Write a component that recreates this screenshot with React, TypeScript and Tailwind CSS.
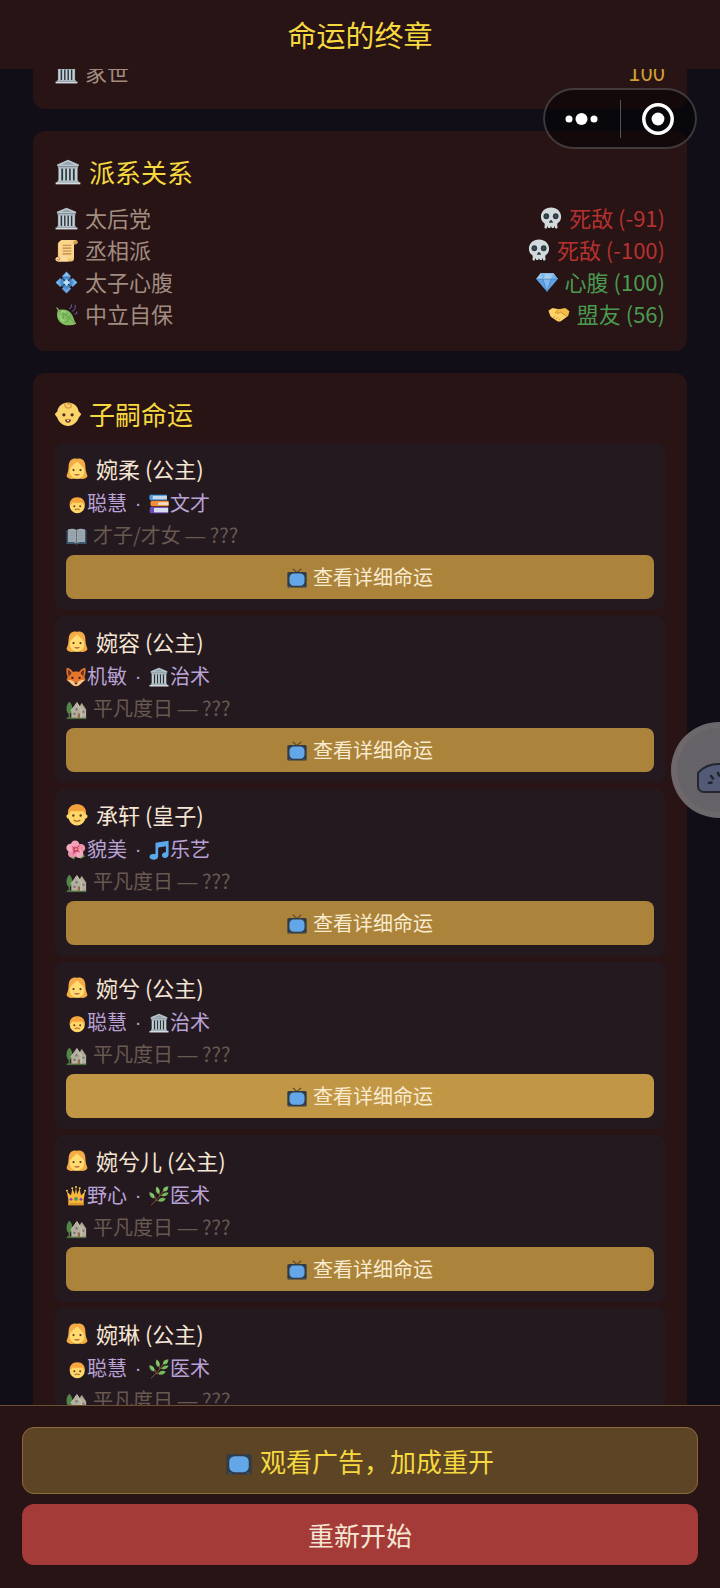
import React from 'react';
import clsx from 'clsx';

const icons = {
  palace: (
    <>
      <path d="M3 8h18v13H3z" fill="#7f929c" />
      <path d="M5.4 9h2.4v11H5.4zM9 9h2.4v11H9zM12.6 9H15v11h-2.4zM16.2 9h2.4v11h-2.4z" fill="#2b343a" />
      <path d="M3.6 8.6h2.2v11.6H3.6zM7.5 8.6h2v11.6h-2zM11 8.6h2v11.6h-2zM14.5 8.6h2v11.6h-2zM18.2 8.6h2.2v11.6h-2.2z" fill="#c3d0d6" />
      <path d="M12 .8 22 5v1.8H2V5z" fill="#b9c6cc" />
      <path d="M12 2.6 18.2 5.3H5.8z" fill="#8fa2ac" />
      <path d="M2.8 6.8h18.4v1.8H2.8z" fill="#a9b8bf" />
      <path d="M2.4 19.8h19.2v1.6H2.4z" fill="#aebdc4" />
      <path d="M.6 21.4h22.8v2H.6z" fill="#d3dce0" />
    </>
  ),
  scroll: (
    <>
      <path d="M7 1h14.2c1.6 0 2.4 1.1 2.4 2.3S22.6 5.4 21.4 5.4h-1.6v15.2c0 1.7-1.1 2.9-2.8 2.9H3V4.2z" fill="#f3c674" />
      <path d="M7 1.2c-2 .3-3 1.7-3 3.6V20h15.8V5.4l1.3-2.2L20 1.2z" fill="#fbd58c" />
      <path d="M21.2 1.6a2 2 0 0 0-2 2v1.8h2.2c1.2 0 2.1-.9 2.1-2s-.9-1.8-2.3-1.8z" fill="#d59a4e" />
      <path d="M2.9 18.8h10.8c-1.1 1.3-1 3.1.3 4.7H3C1.4 23.5.4 22.500.4 21.200s1-2.400 2.500-2.400z" fill="#fbdc9e" />
      <path d="M2.900 18.800c1.300 0 2 .9 2 1.900s-.7 1.500-1.500 1.500-1.300-.5-1.300-1.200" fill="none" stroke="#b9793a" strokeWidth="1" />
      <path d="M8 6.500h9M8 9.500h9M8 12.500h9M8 15.500h9" stroke="#b98245" strokeWidth="1.200" />
    </>
  ),
  flower: (
    <>
      <path d="M12 .6 16.800 5.400 12 10.200 7.200 5.400zM12 13.800l4.800 4.800-4.800 4.800-4.800-4.800zM5.400 7.200l4.800 4.800-4.800 4.800L.6 12zM18.600 7.200l4.800 4.800-4.800 4.800-4.800-4.800z" fill="#64a5e4" />
      <path d="M8 7.300 12 5l4 2.300 2.700 4.700-2.700 4.700-4 2.300-4-2.300L5.300 12z" fill="#4a88c6" />
      <path d="M12 1.800 14.600 4.600 12 5.600 9.400 4.600zM3.600 9.800l-2 2.200 2 1.500zM20.400 9.800l2 2.200-2 1.500z" fill="#8fc4f4" />
      <path d="M12 8.400 15.600 12 12 15.600 8.400 12z" fill="#b9ddf8" />
      <path d="m8.300 8.300 2 2M15.700 8.300l-2 2M8.300 15.700l2-2M15.700 15.700l-2-2" stroke="#23415f" strokeWidth="1.300" />
    </>
  ),
  leaf: (
    <>
      <path d="M1 4.500c2 .3 2.600 1.400 3.200 2.800 5.500-1.400 11 .2 13.600 5 1.900 3.500 2.100 6.700 4.400 9.300-6.900 3-14.800 2-18.200-3.200-2.300-3.600-2.300-7.400-1-10.500z" fill="#84c062" />
      <path d="M4.200 8.300c5 2.200 11 7.200 16.400 12.700M9 11v4.500l-4 .3M13.500 14.500v4.800l-4.200 1M11.500 8.500l.3 4.500M16 11.800l-.2 4.600" stroke="#5a9549" strokeWidth=".8" fill="none" />
      <path d="M6 9.500c2-.9 4.400-.6 6 .2M5 13.500c.8 2.500 2 4.500 5 6" stroke="#a5d681" strokeWidth="1.300" fill="none" />
      <path d="M14.500 6c2.300-.7 3-2.400 2.700-4.500M18 8.500c2.600-.5 3.500-2.900 3-6.500M20.500 11.500c1.600 0 2.300-1 2.500-2.500" stroke="#56609c" strokeWidth="1.100" fill="none" />
    </>
  ),
  skull: (
    <>
      <path d="M12 .6c6.300 0 11 4.300 11 10 0 3.300-1.300 5.400-3.600 6.800l-.6 1.400.3 3.600c0 .7-.6 1.100-1.300 1.100s-1.200-.3-1.400-1l-.5-2-.7 2c-.3.7-2.200.7-2.500 0l-.7-1.800-.7 1.800c-.3.7-2.200.7-2.500 0l-.7-2-.5 2c-.2.7-.7 1-1.400 1s-1.300-.4-1.300-1.100l.3-3.600-.6-1.400C2.300 16 1 13.900 1 10.600c0-5.700 4.700-10 11-10z" fill="#d3dadd" />
      <ellipse cx="6.900" cy="10" rx="3.100" ry="3.300" fill="#2f3b42" />
      <ellipse cx="17.100" cy="10" rx="3.100" ry="3.300" fill="#2f3b42" />
      <circle cx="6.900" cy="10" r="1.100" fill="#4c5b64" />
      <circle cx="17.100" cy="10" r="1.100" fill="#4c5b64" />
      <path d="M12 14.200c1 0 2 1.700 2 2.600 0 .8-1.400.8-2 .1-.6.7-2 .7-2-.1 0-.9 1-2.600 2-2.600z" fill="#2f3b42" />
    </>
  ),
  gem: (
    <>
      <path d="M5 2.500h14l4.800 6.300L12 22.500.2 8.800z" fill="#5fa3e6" />
      <path d="M5 2.500h14l4.800 6.300H.2z" fill="#9cc8f1" />
      <path d="m5 2.500 2.500 6.300L12 2.500l4.500 6.300L19 2.500l4.800 6.300h-5.300z" fill="#74b0e9" />
      <path d="M7.500 8.800h9L12 22.500z" fill="#80b7ee" />
      <path d="M12 2.500 7.500 8.800h9z" fill="#a5cff4" />
      <path d="M.2 8.800h23.600M7.500 8.800 12 22.500l4.500-13.700" stroke="#3a71ad" strokeWidth=".6" fill="none" />
    </>
  ),
  handshake: (
    <>
      <path d="M.4 8.500 4.600 5.700c2.500.3 4.500.8 6.800.8 2.700 0 5-1 8-.8l4 3.400-1.400 5.200-7.600 5.200c-1.500.8-3.200 1-4.600 0L3 15z" fill="#f4bd49" />
      <path d="M4.600 5.700c2.500.3 4.700.8 6.800.8L8 10.500c1.500 1.500 3.800.8 5.600-.7l7 4.600-6.200 4.800c-1.500.9-3.200.9-4.600 0L3 14.300 1 8.700z" fill="#ffd368" />
      <path d="M11.400 6.600 8 10.500c1.500 1.500 3.800.8 5.600-.7l6.800 4.800M6 16l2-1.700M8.500 17.600l2.200-2M11.200 19l2-2" stroke="#c28625" strokeWidth=".9" fill="none" />
    </>
  ),
  baby: (
    <>
      <path d="M12 1.400c5.200 0 9 3.300 9.900 8.300l1.700 1.500c.5.500.5 1.500 0 2L22 15.200c-1.600 4.600-5.200 7.800-10 7.800s-8.400-3.200-10-7.800L.4 13.200c-.5-.5-.5-1.500 0-2l1.700-1.500C3 4.700 6.800 1.400 12 1.400z" fill="#fbd36b" />
      <path d="M9 2.600c0 2.500 1.200 3.900 3.200 3.900 1.700 0 2.800-1 2.800-2.200 0-1.300-1-2-2.100-2-.9 0-1.500.6-1.500 1.200" stroke="#d9963a" strokeWidth="1.200" fill="none" />
      <circle cx="8.200" cy="12.800" r="1.500" fill="#4a2f1e" />
      <circle cx="15.800" cy="12.800" r="1.500" fill="#4a2f1e" />
      <path d="M9.300 17h5.400c0 1.800-1.100 3-2.700 3s-2.700-1.200-2.700-3z" fill="#6b2f20" />
      <path d="M11 17.500h2l-.4 1.200h-1.200z" fill="#fff" />
    </>
  ),
  girl: (
    <>
      <path d="M12 1c-1.500-.8-5-.6-7.200 1.800C2.500 5.400 3 9 2.600 12.500 2.300 15.700.8 17.500.6 20c1.400 2.500 4.500 3.400 7 2.700h8.800c2.500.7 5.600-.2 7-2.700-.2-2.500-1.700-4.300-2-7.500-.4-3.500.1-7.100-2.200-9.700C17 .4 13.500.2 12 1z" fill="#f3ab42" />
      <path d="M12 4c5.200 1 7.900 4.800 8.100 9 .2 5.700-3 9.300-8.100 9.300S3.700 18.700 3.900 13C4.100 8.800 6.800 5 12 4z" fill="#ffdb70" />
      <path d="M12 2.500C10.500 6.500 6.500 8 4 12 3.300 6 6 2 12 2.500zM12 2.500C13.500 6.500 17.500 8 20 12 20.700 6 18 2 12 2.500z" fill="#f5ab4b" />
      <circle cx="8.200" cy="13.200" r="1.200" fill="#5a3923" />
      <circle cx="15.800" cy="13.200" r="1.200" fill="#5a3923" />
      <path d="M8.800 17.600h6.400c-.8 1.900-5.600 1.900-6.400 0z" fill="#b54c36" />
    </>
  ),
  boy: (
    <>
      <path d="M12 .6c6 0 9.800 4 9.800 9.600v1.200c1.500.2 1.900 1.300 1.600 2.500-.3 1.300-1 2-2.200 2-1.300 4.500-4.600 7.500-9.200 7.500s-7.900-3-9.200-7.500c-1.200 0-1.900-.7-2.200-2-.3-1.200.1-2.300 1.600-2.500v-1.200C2.200 4.600 6 .6 12 .6z" fill="#ffd768" />
      <path d="M12 .4c6.300 0 10.300 4.200 9.900 10.600-2-.5-2.200-2.500-3.600-3.700C14 8.200 10 8.100 5.700 7.300 4.300 8.500 4 10.600 2.100 11 1.700 4.600 5.700.4 12 .4z" fill="#f2a03c" />
      <circle cx="8" cy="12.600" r="1.300" fill="#5a3923" />
      <circle cx="16" cy="12.600" r="1.300" fill="#5a3923" />
      <path d="M8.300 17.500c2 1.800 5.400 1.800 7.400 0" stroke="#a8642a" strokeWidth="1.300" fill="none" />
    </>
  ),
  thinker: (
    <>
      <circle cx="13.500" cy="14" r="9" fill="#ffd768" />
      <path d="M13.500 4c6 0 9.500 4 9 9.500-1.800-.6-2.300-2.200-3.300-3.400-4 .5-7.400.5-11.400 0-1 1.200-1.500 2.800-3.300 3.400C4 8 7.500 4 13.500 4z" fill="#f6a53c" />
      <circle cx="10" cy="14.600" r="1.200" fill="#5a3923" />
      <circle cx="17" cy="14.600" r="1.200" fill="#5a3923" />
      <path d="M10.500 19c1.800-1.300 4.200-1.300 6 0" stroke="#a8642a" strokeWidth="1.300" fill="none" />
    </>
  ),
  books: (
    <>
      <path d="M1.500 1h20v6.500h-20C0 6.700 0 1.800 1.500 1z" fill="#4b9be0" />
      <path d="M4.500 2.300h17V6.200h-17z" fill="#c9d8e8" />
      <path d="M3 8.200h20.500v6.600H3c-1.600-.8-1.600-5.800 0-6.600z" fill="#ef8d3c" />
      <path d="M11 9.800h12.500v3.500H11z" fill="#f7dcbf" />
      <path d="M2 15.500h21v7.700H2c-1.600-.8-1.600-6.900 0-7.700z" fill="#6f4bb4" />
      <path d="M6 16.700h17v5.300H6z" fill="#d7dcf4" />
    </>
  ),
  book: (
    <>
      <path d="M.6 5 3 3.600h18L23.400 5v15.500h-9.800L12 21.800l-1.600-1.300H.6z" fill="#3a566c" />
      <path d="M2.300 4c3.500-1.400 7-1.100 9.700.8 2.700-1.900 6.200-2.200 9.700-.8v14.600c-3.700-.8-7.200-.5-9.700 1.200-2.500-1.700-6-2-9.700-1.200z" fill="#9ba6ae" />
      <path d="M12 4.800v15" stroke="#5c6a75" strokeWidth="1" />
      <path d="M5 7.500c2-.4 3.500-.2 5 .5M5 11c2-.4 3.500-.2 5 .5M5 14.500c2-.4 3.500-.2 5 .5M19 7.500c-2-.4-3.500-.2-5 .5M19 11c-2-.4-3.500-.2-5 .5M19 14.500c-2-.4-3.500-.2-5 .5" stroke="#87939c" strokeWidth=".7" fill="none" />
    </>
  ),
  fox: (
    <>
      <path d="M.8.8c3.600.6 6 2.600 7.600 5.200 2.400-.7 4.800-.7 7.200 0C17.200 3.400 19.600 1.400 23.200.8c.7 4.200.2 8-1.200 11l1.400 3.800-4 3c-1.800 1.700-4 4.600-7.400 4.600s-5.600-2.900-7.400-4.600l-4-3L2 11.800C.6 8.800.1 5 .8.8z" fill="#e4752b" />
      <path d="M2.600 3.200c2 .9 3.300 2.400 4 4.400L3.500 11c-1-2.500-1.300-5-.9-7.800zM21.400 3.200c-2 .9-3.300 2.400-4 4.400l3.100 3.400c1-2.500 1.300-5 .9-7.800z" fill="#6b3324" />
      <path d="M2 16c3.500-1.200 7 .2 10 4.500 3-4.300 6.500-5.700 10-4.500l-3.300 2.800c-2 2-3.900 4-6.700 4s-4.700-2-6.700-4z" fill="#f2c98c" />
      <circle cx="7.700" cy="13" r="1.400" fill="#3a2018" />
      <circle cx="16.300" cy="13" r="1.400" fill="#3a2018" />
      <path d="M10 19h4l-2 2.400z" fill="#2f1c18" />
    </>
  ),
  blossom: (
    <>
      <path d="M2 17 9 23.500l4-4.500 5 3.500 5-3-6-6z" fill="#5b9a4c" />
      <circle cx="11" cy="5.800" r="5.200" fill="#f3a0b8" />
      <circle cx="18" cy="9.800" r="5" fill="#ee90ab" />
      <circle cx="15.800" cy="16.600" r="5" fill="#f5a9bf" />
      <circle cx="7.400" cy="16.400" r="5" fill="#ee90ab" />
      <circle cx="5.400" cy="9.400" r="5" fill="#f5a9bf" />
      <circle cx="11.500" cy="11.500" r="3.600" fill="#dd4f78" />
      <path d="m11.500 11.500 4.500-5M11.500 11.500 7 7.500M11.500 11.500l5 3M11.500 11.500l-3 5.500" stroke="#c23a66" strokeWidth="1.200" />
      <circle cx="12" cy="11" r="1" fill="#f8cf6d" />
    </>
  ),
  music: (
    <path d="M7.800 3.200 23.500.8v16.600c0 2.400-1.900 4.200-4.300 4.200-2.100 0-3.700-1.300-3.700-3.200 0-2.300 2-4 4.800-3.800V7.400l-9.300 1.500v10.700c0 2.300-2 4-4.300 4C2.200 23.600.6 22.300.6 20.500c0-2.400 2.100-4 4.800-3.700h2.400z" fill="#5aa9ea" />
  ),
  crown: (
    <>
      <path d="M2.800 23V16.500L1 6.500l5 4.500 1.600-8 3 7L12 1.500 13.400 10l3-7L18 11l5-4.500-1.800 10V23z" fill="#f6b73c" />
      <circle cx="1.200" cy="5.800" r="1.200" fill="#ffd05c" />
      <circle cx="7.500" cy="2.600" r="1.200" fill="#ffd05c" />
      <circle cx="12" cy="1.300" r="1.200" fill="#ffd05c" />
      <circle cx="16.500" cy="2.600" r="1.200" fill="#ffd05c" />
      <circle cx="22.800" cy="5.800" r="1.200" fill="#ffd05c" />
      <path d="M2.800 20.300h18.400V23H2.800z" fill="#dc9529" />
      <circle cx="6" cy="16" r="1.700" fill="#8a3fb8" />
      <circle cx="12" cy="15.500" r="2.300" fill="#4d9b52" />
      <circle cx="18" cy="16" r="1.700" fill="#8a3fb8" />
    </>
  ),
  herb: (
    <>
      <path d="M2.500 23C8 18 14 12 18.500 3.500M8.500 17c-.5-3-1.500-5-4-7M8.500 17.500c3 .5 6 .3 9.500-.5M13 12c0-3-.5-5-1.500-8M13.500 11.500c3 0 5-.3 8-2" stroke="#8a5a3c" strokeWidth="1.100" fill="none" />
      <path d="M17 6.500c-.8-3.500 1.500-6 6.300-6.200 0 4.500-2.300 6.900-6.300 6.200zM11.500 9.500C8 8 7.300 4 9.200.5c3.900 2.700 4.800 6.200 2.300 9zM15 11.800c1.700-3.500 4.500-4.500 8.500-3.600-1.700 4-5.200 5.100-8.500 3.600zM6.500 15C2 14.700.2 11.200.6 7.200c4.600 1 6.700 4 5.900 7.800zM11 17.800c1.800-3.500 5-4.500 9-2.800-1.700 4-5.700 5.100-9 2.800z" fill="#72b95c" />
      <path d="M9.800 2.500c1 1.500 1.500 3 1.700 5M2.500 9c1.700 1.200 2.700 2.700 3.300 4.500M18.300 4.800l3-2.700" stroke="#a5d98a" strokeWidth="1" fill="none" />
    </>
  ),
  house: (
    <>
      <path d="M.8 21h22.400v2H.8z" fill="#4f6f3c" />
      <path d="M3.800 3c2.200 1.600 3.500 4.800 3.500 8.500 0 3-1.300 5-2.800 5.400V22H3v-5.200C1.500 16.300.6 14 .6 11.500.6 7.800 1.700 4.600 3.800 3z" fill="#4f8746" />
      <path d="m6 13.500 6.500-9 3.500 3.800 2-3.300 5 7.500V21.500H6z" fill="#b5b09b" />
      <path d="m5.500 13.800 7-9.800 5 9v8.500" stroke="#ccc8b8" strokeWidth="1.100" fill="none" />
      <path d="m16 8.300 2-3.300 5 7.500" stroke="#9a9481" strokeWidth="1" fill="none" />
      <path d="M10.800 10.500h2.400V13h-2.400zM8.500 15.800h2.300v2.500H8.500zM18.800 13.500H21v2.200h-2.200z" fill="#6d7580" />
      <path d="M13.500 16.500h2.500v5h-2.500z" fill="#946c50" />
    </>
  ),
  tv: (
    <>
      <path d="M7 1 12 5.500 17 1" stroke="#5b3f2d" strokeWidth="1.400" fill="none" />
      <rect x=".4" y="4.800" width="23.200" height="18.700" rx="1.800" fill="#2f3c47" />
      <rect x="3" y="6.600" width="18" height="14.800" rx="5" fill="#64a7e8" />
      <path d="M2 22.300h3M19 22.300h3" stroke="#566570" strokeWidth=".8" />
    </>
  ),
};

type IconName = keyof typeof icons;

interface IconProps {
  name: IconName;
  className?: string;
}

const Icon: React.FC<IconProps> = ({ name, className }) => (
  <svg viewBox="0 0 24 24" className={clsx('mt-0.5 shrink-0', className)} aria-hidden="true">
    {icons[name]}
  </svg>
);

interface Faction {
  icon: IconName;
  name: string;
  statusIcon: IconName;
  status: string;
  hostile: boolean;
}

interface Child {
  icon: IconName;
  name: string;
  nature: { icon: IconName; label: string };
  talent: { icon: IconName; label: string };
  outcomeIcon: IconName;
  outcome: string;
  pressed?: boolean;
}

const factions: Faction[] = [
  { icon: 'palace', name: '太后党', statusIcon: 'skull', status: '死敌 (-91)', hostile: true },
  { icon: 'scroll', name: '丞相派', statusIcon: 'skull', status: '死敌 (-100)', hostile: true },
  { icon: 'flower', name: '太子心腹', statusIcon: 'gem', status: '心腹 (100)', hostile: false },
  { icon: 'leaf', name: '中立自保', statusIcon: 'handshake', status: '盟友 (56)', hostile: false },
];

const children: Child[] = [
  {
    icon: 'girl',
    name: '婉柔 (公主)',
    nature: { icon: 'thinker', label: '聪慧' },
    talent: { icon: 'books', label: '文才' },
    outcomeIcon: 'book',
    outcome: '才子/才女',
  },
  {
    icon: 'girl',
    name: '婉容 (公主)',
    nature: { icon: 'fox', label: '机敏' },
    talent: { icon: 'palace', label: '治术' },
    outcomeIcon: 'house',
    outcome: '平凡度日',
  },
  {
    icon: 'boy',
    name: '承轩 (皇子)',
    nature: { icon: 'blossom', label: '貌美' },
    talent: { icon: 'music', label: '乐艺' },
    outcomeIcon: 'house',
    outcome: '平凡度日',
  },
  {
    icon: 'girl',
    name: '婉兮 (公主)',
    nature: { icon: 'thinker', label: '聪慧' },
    talent: { icon: 'palace', label: '治术' },
    outcomeIcon: 'house',
    outcome: '平凡度日',
    pressed: true,
  },
  {
    icon: 'girl',
    name: '婉兮儿 (公主)',
    nature: { icon: 'crown', label: '野心' },
    talent: { icon: 'herb', label: '医术' },
    outcomeIcon: 'house',
    outcome: '平凡度日',
  },
  {
    icon: 'girl',
    name: '婉琳 (公主)',
    nature: { icon: 'thinker', label: '聪慧' },
    talent: { icon: 'herb', label: '医术' },
    outcomeIcon: 'house',
    outcome: '平凡度日',
  },
];

interface CardProps {
  icon?: IconName;
  title?: string;
  children: React.ReactNode;
}

const Card: React.FC<CardProps> = ({ icon, title, children }) => (
  <section className="rounded-xl bg-[#281315] p-[22px]">
    {icon && (
      <h2 className="mb-3 flex h-9 items-center gap-2 text-[26px] text-[#f5d93f]">
        <Icon name={icon} className="size-[26px]" />
        {title}
      </h2>
    )}
    {children}
  </section>
);

interface StatRowProps {
  icon: IconName;
  label: string;
  children: React.ReactNode;
}

const StatRow: React.FC<StatRowProps> = ({ icon, label, children }) => (
  <div className="flex h-8 items-center justify-between text-[22px]">
    <span className="flex items-center gap-[7px] text-[#a08d80]">
      <Icon name={icon} className="size-[23px]" />
      {label}
    </span>
    {children}
  </div>
);

const ChildItem: React.FC<{ child: Child }> = ({ child }) => (
  <li className="rounded-lg bg-[#251920] p-[11px]">
    <h3 className="flex h-7 items-center gap-2 text-[22px] text-[#f5e6d3]">
      <Icon name={child.icon} className="size-[22px]" />
      {child.name}
    </h3>
    <p className="mt-1.5 flex h-[30px] items-center text-xl text-[#b9a2d6]">
      <Icon name={child.nature.icon} className="mr-px size-5" />
      {child.nature.label}
      <span className="w-[22px] text-center font-['Liberation_Sans',sans-serif]">·</span>
      <Icon name={child.talent.icon} className="mr-px size-5" />
      {child.talent.label}
    </p>
    <p className="mt-0.5 flex h-[30px] items-center gap-[6px] text-xl text-[#685a50]">
      <Icon name={child.outcomeIcon} className="size-[21px]" />
      <span>
        {child.outcome} <span className="font-['Liberation_Sans',sans-serif]">—</span> ???
      </span>
    </p>
    <button
      type="button"
      className={clsx(
        'mt-[5px] flex h-11 w-full items-center justify-center gap-[6px] rounded-lg text-xl text-[#f9ebcf]',
        child.pressed ? 'bg-[#c19745]' : 'bg-[#ab833a]'
      )}
    >
      <Icon name="tv" className="size-5" />
      查看详细命运
    </button>
  </li>
);

const MenuCapsule: React.FC = () => (
  <div className="absolute top-[88px] right-[23px] flex h-[61px] w-[154px] items-center rounded-full border-2 border-white/20 bg-black/50">
    <button type="button" aria-label="更多" className="flex h-full flex-1 items-center justify-center">
      <svg viewBox="0 0 36 14" className="h-[14px] w-9" fill="#fff">
        <circle cx="5" cy="7" r="3.500" />
        <circle cx="17.500" cy="7" r="6" />
        <circle cx="30" cy="7" r="3.500" />
      </svg>
    </button>
    <span className="h-[38px] w-px bg-white/30" />
    <button type="button" aria-label="关闭" className="flex h-full flex-1 items-center justify-center">
      <svg viewBox="0 0 32 32" className="size-8">
        <circle cx="16" cy="16" r="14.200" fill="none" stroke="#fff" strokeWidth="3.500" />
        <circle cx="16" cy="16" r="6.400" fill="#fff" />
      </svg>
    </button>
  </div>
);

const FloatingBall: React.FC = () => (
  <button type="button" aria-label="悬浮球" className="absolute top-[722px] -right-[47px] size-24">
    <svg viewBox="0 0 96 96" className="size-24">
      <circle cx="48" cy="48" r="48" fill="#757174" fillOpacity=".9" />
      <circle cx="48" cy="48" r="42" fill="#636165" fillOpacity=".75" />
      <path d="M27 51c5-6 12-9 21-9s17 4 21 10v12c0 4-2 6-6 6H33c-4 0-6-3-6-6z" fill="#525a76" stroke="#24262f" strokeWidth="2" />
      <path d="m40 54 2 2.500M38 61l2.500-.5M47 51l1 2.500" stroke="#20232d" strokeWidth="2.500" strokeLinecap="round" />
    </svg>
  </button>
);

const App: React.FC = () => {
  return (
    <div
      lang="zh-CN"
      className="relative flex h-screen flex-col overflow-hidden bg-[#110e17] font-['Noto_Sans_CJK_SC',sans-serif]"
    >
      <header className="flex h-[69px] shrink-0 items-center justify-center bg-[#281315]">
        <h1 className="text-[29px] text-[#f5d93f]">命运的终章</h1>
      </header>

      <main className="min-h-0 flex-1 overflow-hidden px-[33px]">
        <div className="-mt-9 flex flex-col gap-[22px]">
          <Card>
            <StatRow icon="palace" label="家世">
              <span className="text-[#cf9f35]">100</span>
            </StatRow>
          </Card>

          <Card icon="palace" title="派系关系">
            {factions.map((faction) => (
              <StatRow key={faction.name} icon={faction.icon} label={faction.name}>
                <span
                  className={clsx(
                    'flex items-center gap-[7px]',
                    faction.hostile ? 'text-[#b5322f]' : 'text-[#4a9a4f]'
                  )}
                >
                  <Icon name={faction.statusIcon} className="size-[22px]" />
                  {faction.status}
                </span>
              </StatRow>
            ))}
          </Card>

          <Card icon="baby" title="子嗣命运">
            <ul className="flex flex-col gap-[6px]">
              {children.map((child) => (
                <ChildItem key={child.name} child={child} />
              ))}
            </ul>
          </Card>
        </div>
      </main>

      <footer className="flex shrink-0 flex-col gap-[10px] border-t border-[#6b4e34] bg-[#281315] px-[22px] pt-[21px] pb-[23px]">
        <button
          type="button"
          className="flex h-[67px] items-center justify-center gap-2 rounded-xl border border-[#8a6c3c] bg-[#5c4424] text-[26px] text-[#f5d93f]"
        >
          <Icon name="tv" className="size-[26px]" />
          观看广告，加成重开
        </button>
        <button
          type="button"
          className="flex h-[61px] items-center justify-center rounded-xl bg-[#a53b38] text-[26px] text-[#f5e6d3]"
        >
          重新开始
        </button>
      </footer>

      <MenuCapsule />
      <FloatingBall />
    </div>
  );
};

export default App;
